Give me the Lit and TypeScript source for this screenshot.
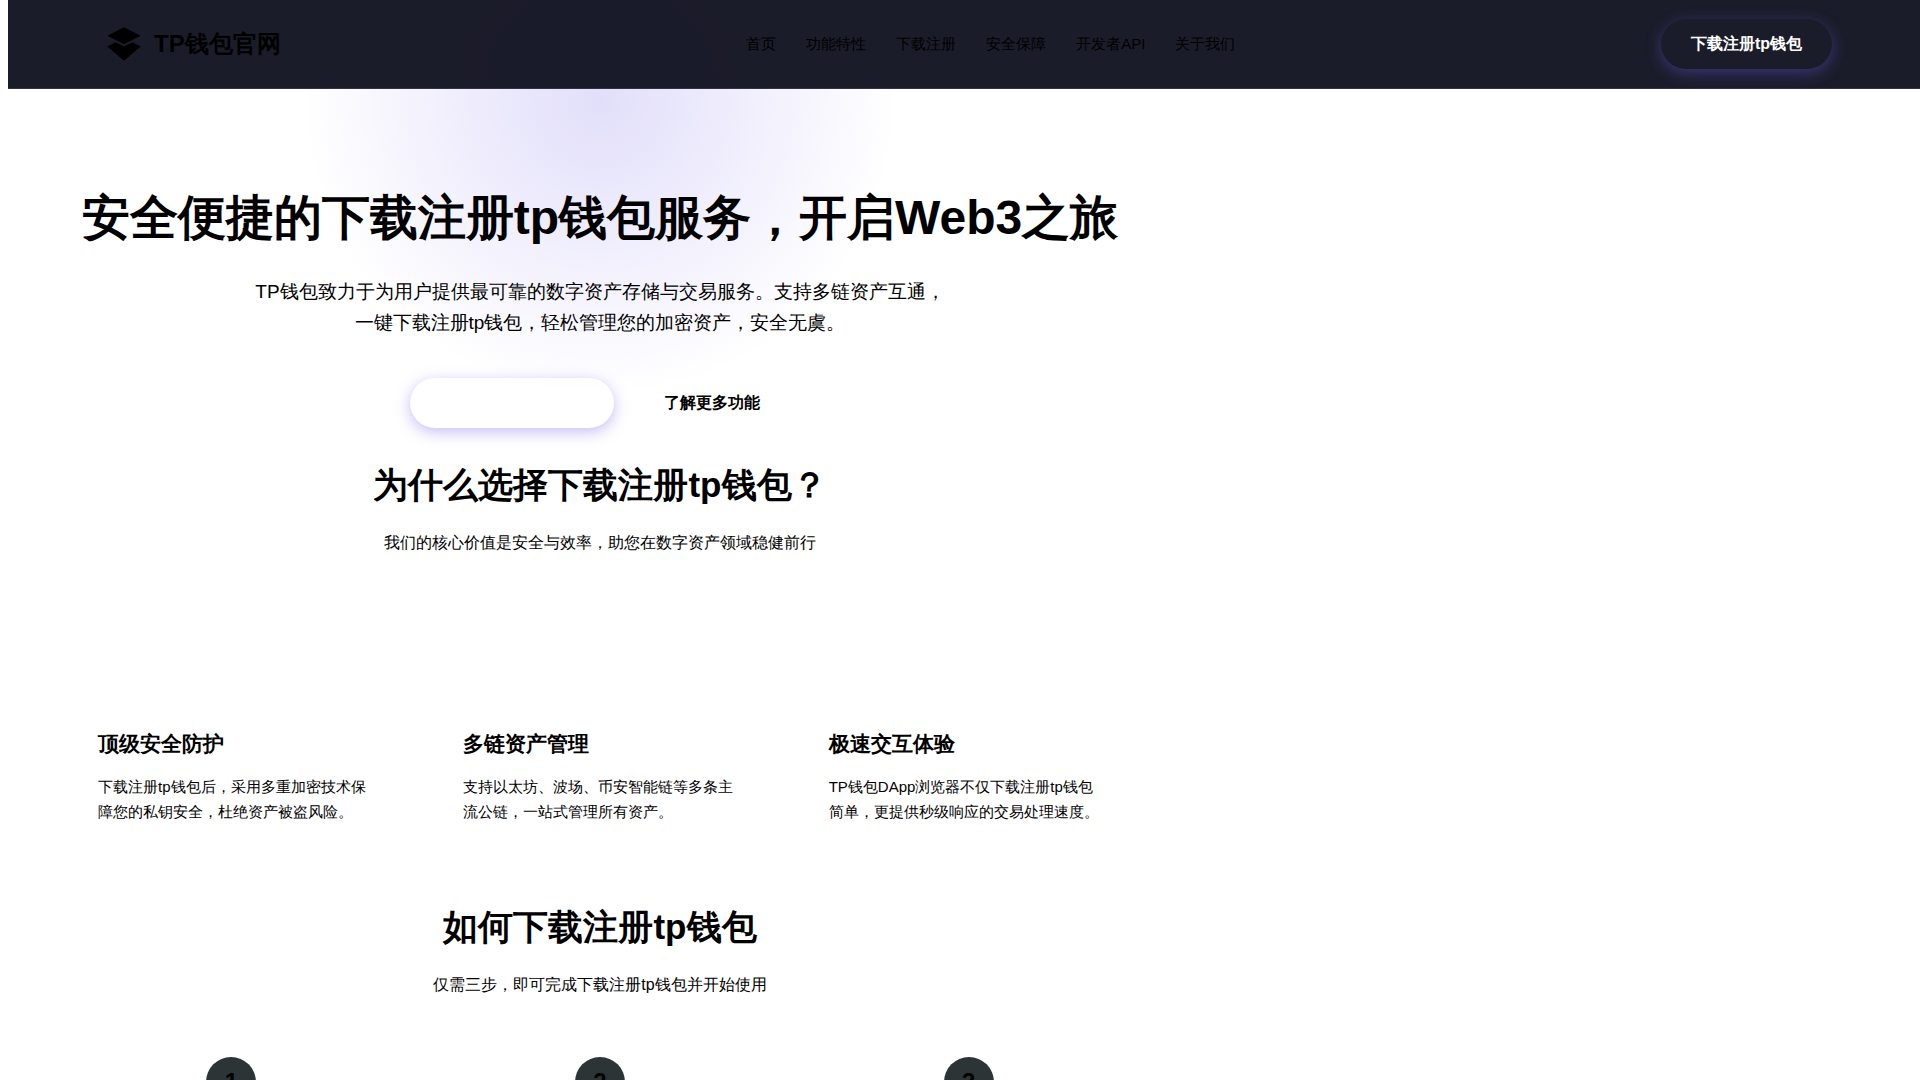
import { LitElement, html, css } from "lit";
import { customElement } from "lit/decorators.js";

const NAV = ["首页", "功能特性", "下载注册", "安全保障", "开发者API", "关于我们"];

const FEATURES = [
  { title: "顶级安全防护", text: "下载注册tp钱包后，采用多重加密技术保障您的私钥安全，杜绝资产被盗风险。" },
  { title: "多链资产管理", text: "支持以太坊、波场、币安智能链等多条主流公链，一站式管理所有资产。" },
  { title: "极速交互体验", text: "TP钱包DApp浏览器不仅下载注册tp钱包简单，更提供秒级响应的交易处理速度。" },
];

const STEPS = [1, 2, 3];

@customElement("app-root")
export class AppRoot extends LitElement {
  static styles = css`
    :host {
      display: block;
      min-height: 100vh;
      background: #fff;
      color: #000;
      font-family: "Liberation Sans", sans-serif;
      font-size: 16px;
      line-height: 26px;
      overflow-x: clip;
    }
    h1, h2, h3, p, ul, ol {
      margin: 0;
      padding: 0;
    }
    ul, ol {
      list-style: none;
    }
    a {
      color: inherit;
      text-decoration: none;
    }
    .header {
      position: relative;
      z-index: 1;
      display: flex;
      align-items: center;
      justify-content: space-between;
      margin-left: 8px;
      padding: 19px 88px 19px 96px;
      background: rgba(15, 16, 31, 0.95);
      border-bottom: 1px solid rgba(255, 255, 255, 0.1);
    }
    .logo {
      display: flex;
      align-items: center;
      gap: 10px;
      font-size: 24px;
      font-weight: 700;
    }
    .logo-mark {
      width: 40px;
      height: 40px;
      fill: currentColor;
    }
    .nav {
      display: flex;
      flex-wrap: wrap;
      gap: 30px;
      padding-left: 40px;
      font-size: 15px;
    }
    .btn {
      box-sizing: border-box;
      padding: 12px 30px;
      border: 0;
      border-radius: 50px;
      background: transparent;
      color: inherit;
      font: inherit;
      font-weight: 700;
      cursor: pointer;
    }
    .btn-primary {
      color: #fff;
      box-shadow: 0 4px 15px rgba(108, 92, 231, 0.4);
    }
    .main {
      position: relative;
      max-width: 1184px;
      margin-left: 8px;
    }
    .glow {
      position: absolute;
      top: -290px;
      left: 50%;
      width: 600px;
      height: 600px;
      margin-left: -300px;
      background: radial-gradient(circle, rgba(108, 92, 231, 0.2) 0%, transparent 70%);
      pointer-events: none;
    }
    .section {
      position: relative;
      padding: 0 59px;
      text-align: center;
    }
    .hero {
      padding-top: 99px;
    }
    .hero-title {
      font-size: 48px;
      line-height: 60px;
    }
    .hero-text {
      max-width: 700px;
      margin: 28px auto 40px;
      font-size: 19px;
      line-height: 31px;
    }
    .actions {
      display: flex;
      flex-wrap: wrap;
      justify-content: center;
      gap: 20px;
    }
    .intro {
      padding-top: 29px;
    }
    .section-title {
      margin-bottom: 17px;
      font-size: 35px;
      line-height: 56px;
    }
    .features {
      display: grid;
      grid-template-columns: repeat(3, 1fr);
      gap: 30px;
      padding-top: 141px;
    }
    .card {
      padding: 30px 31px;
      text-align: left;
    }
    .card-title {
      margin-bottom: 13px;
      font-size: 21px;
      line-height: 34px;
    }
    .card-text {
      font-size: 15px;
      line-height: 25px;
    }
    .guide {
      padding-top: 45px;
    }
    .steps {
      display: grid;
      grid-template-columns: repeat(3, 1fr);
      gap: 40px;
      padding-top: 59px;
    }
    .step {
      display: flex;
      justify-content: center;
    }
    .step-number {
      display: flex;
      align-items: center;
      justify-content: center;
      width: 50px;
      height: 50px;
      border-radius: 50%;
      background: #2d3436;
      font-size: 24px;
      font-weight: 700;
    }
  `;

  render() {
    return html`
      <header class="header">
        <a class="logo" href="#">
          <svg class="logo-mark" viewBox="0 0 24 24" aria-hidden="true">
            <path d="M12 2L2 7l10 5 10-5-10-5zm0 9l2.5-1.25L12 8.5l-2.5 1.25L12 11zm0 2.5l-5-2.5-5 2.5L12 22l10-8.5-5-2.5-5 2.5z" />
          </svg>
          <span>TP钱包官网</span>
        </a>
        <nav class="nav">${NAV.map((label) => html`<a href="#">${label}</a>`)}</nav>
        <button class="btn btn-primary">下载注册tp钱包</button>
      </header>
      <main class="main">
        <div class="glow"></div>
        <section class="section hero">
          <h1 class="hero-title">安全便捷的下载注册tp钱包服务，开启Web3之旅</h1>
          <p class="hero-text">
            TP钱包致力于为用户提供最可靠的数字资产存储与交易服务。支持多链资产互通，一键下载注册tp钱包，轻松管理您的加密资产，安全无虞。
          </p>
          <div class="actions">
            <button class="btn btn-primary">立即下载注册tp钱包</button>
            <button class="btn">了解更多功能</button>
          </div>
        </section>
        <section class="section intro">
          <h2 class="section-title">为什么选择下载注册tp钱包？</h2>
          <p>我们的核心价值是安全与效率，助您在数字资产领域稳健前行</p>
        </section>
        <section class="section features">
          ${FEATURES.map(
            (feature) => html`
              <article class="card">
                <h3 class="card-title">${feature.title}</h3>
                <p class="card-text">${feature.text}</p>
              </article>
            `
          )}
        </section>
        <section class="section guide">
          <h2 class="section-title">如何下载注册tp钱包</h2>
          <p>仅需三步，即可完成下载注册tp钱包并开始使用</p>
        </section>
        <ol class="section steps">
          ${STEPS.map((step) => html`<li class="step"><span class="step-number">${step}</span></li>`)}
        </ol>
      </main>
    `;
  }
}
